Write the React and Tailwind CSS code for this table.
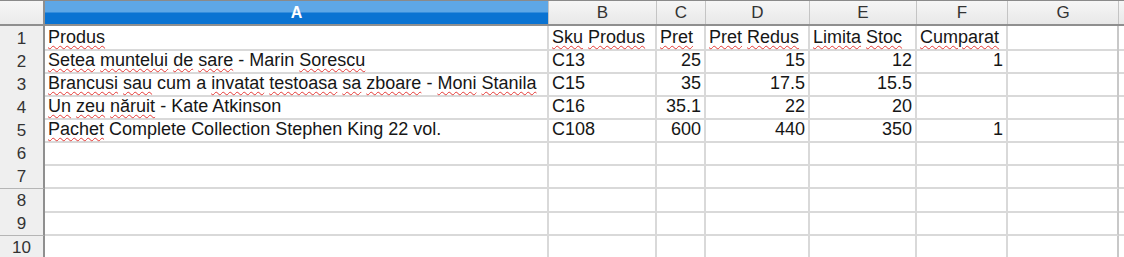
const COLS = ["A", "B", "C", "D", "E", "F", "G"];

// misspelled words get the red squiggle
const FLAGGED = new Set([
  "Produs", "Sku", "Pret", "Redus", "Limita", "Stoc", "Cumparat",
  "Setea", "muntelui", "de", "sare", "Sorescu",
  "Brancusi", "sau", "invatat", "testoasa", "sa", "zboare", "Moni", "Stanila",
  "Un", "zeu", "năruit", "Pachet",
]);

const ROWS = [
  ["Produs", "Sku Produs", "Pret", "Pret Redus", "Limita Stoc", "Cumparat", ""],
  ["Setea muntelui de sare - Marin Sorescu", "C13", 25, 15, 12, 1, ""],
  ["Brancusi sau cum a invatat testoasa sa zboare - Moni Stanila", "C15", 35, 17.5, 15.5, "", ""],
  ["Un zeu năruit - Kate Atkinson", "C16", 35.1, 22, 20, "", ""],
  ["Pachet Complete Collection Stephen King 22 vol.", "C108", 600, 440, 350, 1, ""],
  ["", "", "", "", "", "", ""],
  ["", "", "", "", "", "", ""],
  ["", "", "", "", "", "", ""],
  ["", "", "", "", "", "", ""],
  ["", "", "", "", "", "", ""],
];

const HEIGHTS = ["h-[23px]", "h-[23px]", "h-[23px]", "h-[23px]", "h-[24px]", "h-[23px]", "h-[24px]", "h-[23px]", "h-[24px]", "h-[24px]"];

const GRID = "grid grid-cols-[45px_504px_108px_49px_104px_107px_91px_111px_1fr]";

function CellText({ value }) {
  if (typeof value === "number") return <span>{value}</span>;
  const words = value.split(" ");
  return (
    <span>
      {words.map((w, i) => (
        <span key={i}>
          {FLAGGED.has(w) ? (
            <span className="underline decoration-wavy decoration-[#e53935] decoration-1 underline-offset-2">{w}</span>
          ) : (
            w
          )}
          {i < words.length - 1 ? " " : ""}
        </span>
      ))}
    </span>
  );
}

export default function App() {
  return (
    <div className="w-[1124px] h-[257px] overflow-hidden bg-white text-[18px] leading-[23px] text-[#161616] font-['Liberation_Sans',Arial,sans-serif]">
      <div className={`${GRID} h-[26px] border-t border-[#8a8a8a] border-b-2 border-b-[#8f8f8f]`}>
        <div className="bg-gradient-to-b from-[#f6f6f6] to-[#ebebeb] border-r-2 border-[#8f8f8f]" />
        {COLS.map((c) =>
          c === "A" ? (
            <div key={c} className="flex items-center justify-center bg-[linear-gradient(to_bottom,#5ea7e6_0%,#5ea7e6_48%,#0a73d2_52%,#0a73d2_100%)] font-bold text-white text-[16px] border-r border-[#c4c4c4]">
              {c}
            </div>
          ) : (
            <div key={c} className="flex items-center justify-center bg-gradient-to-b from-[#f6f6f6] to-[#e8e8e8] text-[#333] text-[17px] border-r border-[#c4c4c4]">
              {c}
            </div>
          )
        )}
        <div className="bg-gradient-to-b from-[#f6f6f6] to-[#e8e8e8]" />
      </div>

      {ROWS.map((row, r) => (
        <div key={r} className={`${GRID} ${HEIGHTS[r]}`}>
          <div className="flex items-center justify-center bg-[#efefef] text-[#333] text-[17px] border-r-2 border-[#8f8f8f] border-b border-b-[#b5b5b5]">
            {r + 1}
          </div>
          {row.map((v, c) => (
            <div
              key={c}
              className={`overflow-visible whitespace-nowrap px-[3px] border-r-2 border-b-2 border-[#d9d9d9] ${typeof v === "number" ? "text-right" : "text-left"} ${c === 6 ? "border-r-[#c8c8c8]" : ""}`}
            >
              {v === "" ? null : <CellText value={v} />}
            </div>
          ))}
          <div className="border-b-2 border-[#d9d9d9]" />
        </div>
      ))}
    </div>
  );
}
